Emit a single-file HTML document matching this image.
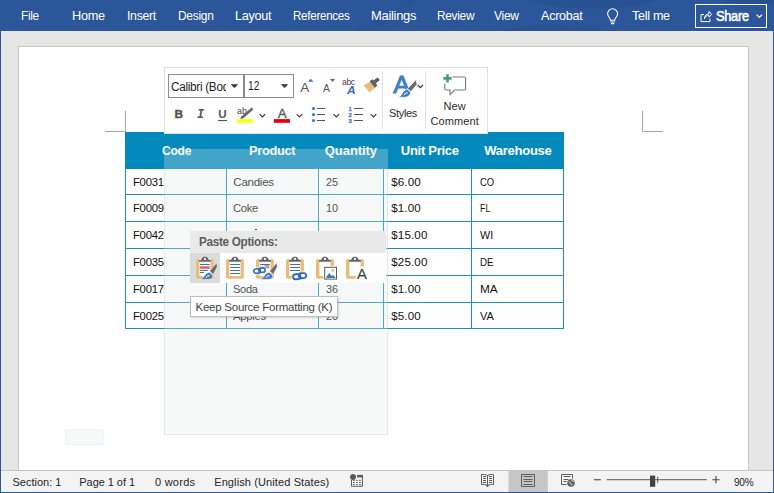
<!DOCTYPE html>
<html lang="en">
<head>
<meta charset="utf-8">
<title>Word - Paste Options</title>
<style>
*{box-sizing:border-box;margin:0;padding:0}
html,body{width:774px;height:493px;overflow:hidden}
body{position:relative;background:#e6e6e6;font-family:"Liberation Sans",sans-serif;color:#262626}
.abs{position:absolute}
.t{position:absolute;white-space:nowrap;line-height:1}
svg{position:absolute;overflow:visible}
#ribbon{left:0;top:0;width:774px;height:31px;background:#2b579a;overflow:hidden}
#ribbon .t{color:#fff}
#lb{left:0;top:0;width:1px;height:493px;background:#2b579a}
#rb{left:773px;top:0;width:1px;height:493px;background:#2b579a}
#bb{left:0;top:492px;width:774px;height:1px;background:#2b579a}
#page{left:18px;top:46px;width:731px;height:430px;background:#fff;border:1px solid #c8c8c8;border-bottom:none}
#status{left:1px;top:470px;width:772px;height:22px;background:#f3f3f3;border-top:1px solid #c6c6c6}
#status .t{color:#333}
.hd{position:absolute;left:125px;top:132px;width:439px;height:37px;background:#0489bd}
.hd .t{color:#fff}
.vl{position:absolute;width:1px;background:#1f8ec4}
.hl{position:absolute;height:1px;background:#1f8ec4}
.c{color:#2a2a2a}
#ov{left:164px;top:149px;width:224px;height:286px;background:rgba(226,233,231,0.28)}
#mt{left:164px;top:67px;width:324px;height:67px;background:#fff;border:1px solid #e1e1e1}
.combo{position:absolute;background:#fff;border:1px solid #8c8c8c;height:24px;top:74px}
.sep{position:absolute;width:1px;background:#e1e1e1}
#ph{left:190px;top:231px;width:196px;height:22px;background:#e9e9e9}
#pi{left:190px;top:253px;width:196px;height:30px;background:#fdfdfd}
#sel{left:190px;top:253px;width:30px;height:30px;background:#dbdbdb}
#tip{left:190px;top:296px;width:148px;height:21px;background:#fff;border:1px solid #bebebe;box-shadow:1px 1px 2px rgba(0,0,0,.15)}
</style>
</head>
<body>
<div id="page" class="abs"></div>
<div id="ribbon" class="abs">
<svg width="774" height="31" viewBox="0 0 774 31" style="left:0;top:0"><ellipse cx="594" cy="-3" rx="63" ry="11.5" fill="rgba(10,20,70,0.09)"/><ellipse cx="765" cy="-1" rx="45" ry="5.5" fill="rgba(10,20,70,0.10)"/><path d="M417 0 C405 12 392 20 372 31 L352 31 C380 20 398 10 406 0 Z" fill="rgba(10,20,70,0.05)"/><path d="M500 31 C530 22 570 24 610 31 Z" fill="rgba(10,20,70,0.06)"/></svg>
<span class="t" style="left:20.90px;top:9px;font-size:13px;letter-spacing:-0.300px;transform:scaleX(0.9033);transform-origin:0 0;">File</span>
<span class="t" style="left:71.90px;top:9px;font-size:13px;letter-spacing:-0.300px;transform:scaleX(0.9797);transform-origin:0 0;">Home</span>
<span class="t" style="left:126.50px;top:9px;font-size:13px;letter-spacing:-0.300px;transform:scaleX(0.9419);transform-origin:0 0;">Insert</span>
<span class="t" style="left:177.90px;top:9px;font-size:13px;letter-spacing:-0.300px;transform:scaleX(0.9179);transform-origin:0 0;">Design</span>
<span class="t" style="left:235.20px;top:9px;font-size:13px;letter-spacing:-0.300px;transform:scaleX(0.9717);transform-origin:0 0;">Layout</span>
<span class="t" style="left:292.90px;top:9px;font-size:13px;letter-spacing:-0.300px;transform:scaleX(0.8903);transform-origin:0 0;">References</span>
<span class="t" style="left:370.50px;top:9px;font-size:13px;letter-spacing:-0.300px;transform:scaleX(0.9981);transform-origin:0 0;">Mailings</span>
<span class="t" style="left:436.50px;top:9px;font-size:13px;letter-spacing:-0.300px;transform:scaleX(0.9105);transform-origin:0 0;">Review</span>
<span class="t" style="left:494.20px;top:9px;font-size:13px;letter-spacing:-0.300px;transform:scaleX(0.9262);transform-origin:0 0;">View</span>
<span class="t" style="left:540.90px;top:9px;font-size:13px;letter-spacing:-0.300px;transform:scaleX(0.9718);transform-origin:0 0;">Acrobat</span>
<span class="t" style="left:631.90px;top:9px;font-size:13px;letter-spacing:-0.300px;transform:scaleX(0.9673);transform-origin:0 0;">Tell me</span>
<div class="abs" style="left:695px;top:4px;width:72px;height:24px;border:1px solid #fff"></div>
<span class="t" style="left:716.10px;top:9px;font-size:14px;letter-spacing:-0.300px;-webkit-text-stroke:0.55px #fff;transform:scaleX(0.9122);transform-origin:0 0;">Share</span>
</div>
<div class="abs" style="left:105px;top:131px;width:21px;height:1px;background:#a6a6a6"></div>
<div class="abs" style="left:125px;top:111px;width:1px;height:21px;background:#a6a6a6"></div>
<div class="abs" style="left:642px;top:131px;width:21px;height:1px;background:#a6a6a6"></div>
<div class="abs" style="left:642px;top:111px;width:1px;height:21px;background:#a6a6a6"></div>
<div class="hd"></div>
<div class="hd" style="background:none">
<span class="t" style="left:36.60px;top:12px;font-size:13px;letter-spacing:-0.300px;font-weight:bold;transform:scaleX(0.9304);transform-origin:0 0;">Code</span>
<span class="t" style="left:123.70px;top:12px;font-size:13px;letter-spacing:-0.300px;font-weight:bold;transform:scaleX(0.9847);transform-origin:0 0;">Product</span>
<span class="t" style="left:199.80px;top:12px;font-size:13px;letter-spacing:-0.064px;font-weight:bold;">Quantity</span>
<span class="t" style="left:275.80px;top:12px;font-size:13px;letter-spacing:-0.276px;font-weight:bold;">Unit Price</span>
<span class="t" style="left:359.30px;top:12px;font-size:13px;letter-spacing:-0.266px;font-weight:bold;">Warehouse</span>
</div>
<div class="hl" style="left:125px;top:194px;width:439px"></div>
<div class="hl" style="left:125px;top:221px;width:439px"></div>
<div class="hl" style="left:125px;top:248px;width:439px"></div>
<div class="hl" style="left:125px;top:275px;width:439px"></div>
<div class="hl" style="left:125px;top:302px;width:439px"></div>
<div class="hl" style="left:125px;top:328px;width:439px"></div>
<div class="vl" style="left:125px;top:168px;height:161px"></div>
<div class="vl" style="left:226px;top:168px;height:161px"></div>
<div class="vl" style="left:318px;top:168px;height:161px"></div>
<div class="vl" style="left:383px;top:168px;height:161px"></div>
<div class="vl" style="left:471px;top:168px;height:161px"></div>
<div class="vl" style="left:563px;top:168px;height:161px"></div>
<span class="t" style="left:133.40px;top:176px;font-size:11.6px;letter-spacing:-0.300px;color:#111;transform:scaleX(0.9768);transform-origin:0 0;">F0031</span>
<span class="t" style="left:233.30px;top:176px;font-size:11.6px;letter-spacing:-0.288px;color:#111;">Candies</span>
<span class="t" style="left:325.80px;top:176px;font-size:11.6px;color:#111;transform:scaleX(0.9353);transform-origin:0 0;">25</span>
<span class="t" style="left:391.20px;top:176px;font-size:11.6px;letter-spacing:0.109px;color:#111;">$6.00</span>
<span class="t" style="left:479.50px;top:176px;font-size:11.6px;color:#111;transform:scaleX(0.8143);transform-origin:0 0;">CO</span>
<span class="t" style="left:133.40px;top:202px;font-size:11.6px;letter-spacing:-0.300px;color:#111;transform:scaleX(0.9768);transform-origin:0 0;">F0009</span>
<span class="t" style="left:233.30px;top:202px;font-size:11.6px;letter-spacing:-0.300px;color:#111;transform:scaleX(0.9685);transform-origin:0 0;">Coke</span>
<span class="t" style="left:325.80px;top:202px;font-size:11.6px;color:#111;transform:scaleX(0.9353);transform-origin:0 0;">10</span>
<span class="t" style="left:391.20px;top:202px;font-size:11.6px;letter-spacing:0.109px;color:#111;">$1.00</span>
<span class="t" style="left:479.50px;top:202px;font-size:11.6px;color:#111;transform:scaleX(0.7594);transform-origin:0 0;">FL</span>
<span class="t" style="left:133.40px;top:229px;font-size:11.6px;letter-spacing:-0.300px;color:#111;transform:scaleX(0.9768);transform-origin:0 0;">F0042</span>
<span class="t" style="left:233.30px;top:229px;font-size:11.6px;letter-spacing:-0.117px;color:#111;">Cookies</span>
<span class="t" style="left:325.80px;top:229px;font-size:11.6px;color:#111;transform:scaleX(0.9353);transform-origin:0 0;">40</span>
<span class="t" style="left:391.30px;top:229px;font-size:11.6px;letter-spacing:0.127px;color:#111;">$15.00</span>
<span class="t" style="left:479.50px;top:229px;font-size:11.6px;color:#111;transform:scaleX(0.9304);transform-origin:0 0;">WI</span>
<span class="t" style="left:133.40px;top:256px;font-size:11.6px;letter-spacing:-0.300px;color:#111;transform:scaleX(0.9768);transform-origin:0 0;">F0035</span>
<span class="t" style="left:233.30px;top:256px;font-size:11.6px;letter-spacing:-0.300px;color:#111;transform:scaleX(0.9877);transform-origin:0 0;">Chips</span>
<span class="t" style="left:325.80px;top:256px;font-size:11.6px;color:#111;transform:scaleX(0.9353);transform-origin:0 0;">30</span>
<span class="t" style="left:391.30px;top:256px;font-size:11.6px;letter-spacing:0.127px;color:#111;">$25.00</span>
<span class="t" style="left:479.50px;top:256px;font-size:11.6px;color:#111;transform:scaleX(0.8434);transform-origin:0 0;">DE</span>
<span class="t" style="left:133.40px;top:283px;font-size:11.6px;letter-spacing:-0.300px;color:#111;transform:scaleX(0.9768);transform-origin:0 0;">F0017</span>
<span class="t" style="left:233.20px;top:283px;font-size:11.6px;letter-spacing:-0.300px;color:#111;transform:scaleX(0.9510);transform-origin:0 0;">Soda</span>
<span class="t" style="left:325.80px;top:283px;font-size:11.6px;color:#111;transform:scaleX(0.9353);transform-origin:0 0;">36</span>
<span class="t" style="left:391.20px;top:283px;font-size:11.6px;letter-spacing:0.109px;color:#111;">$1.00</span>
<span class="t" style="left:479.50px;top:283px;font-size:11.6px;color:#111;transform:scaleX(1.0208);transform-origin:0 0;">MA</span>
<span class="t" style="left:133.40px;top:310px;font-size:11.6px;letter-spacing:-0.300px;color:#111;transform:scaleX(0.9768);transform-origin:0 0;">F0025</span>
<span class="t" style="left:233.30px;top:310px;font-size:11.6px;letter-spacing:-0.300px;color:#111;transform:scaleX(0.9776);transform-origin:0 0;">Apples</span>
<span class="t" style="left:325.80px;top:310px;font-size:11.6px;color:#111;transform:scaleX(0.9353);transform-origin:0 0;">20</span>
<span class="t" style="left:391.20px;top:310px;font-size:11.6px;letter-spacing:0.109px;color:#111;">$5.00</span>
<span class="t" style="left:479.50px;top:310px;font-size:11.6px;color:#111;transform:scaleX(0.9504);transform-origin:0 0;">VA</span>
<div id="ov" class="abs"></div>
<div class="abs" style="left:164px;top:169px;width:224px;height:266px;border:1px solid rgba(170,180,180,0.22);border-top:none"></div>
<div class="abs" style="left:65px;top:429px;width:39px;height:16px;background:#f7f8f8;border:1px solid #f1f2f2"></div>
<div id="mt" class="abs"></div>
<div class="combo" style="left:168px;width:76px"></div>
<div class="combo" style="left:244px;width:50px"></div>
<div class="abs" style="left:169px;top:75px;width:57px;height:22px;overflow:hidden"><span class="t" style="left:2.40px;top:6px;font-size:12px;letter-spacing:-0.300px;color:#1e1e1e;transform:scaleX(0.9800);transform-origin:0 0;">Calibri (Bod</span></div>
<span class="t" style="left:247.80px;top:80px;font-size:12px;color:#1e1e1e;transform:scaleX(0.8523);transform-origin:0 0;">12</span>
<span class="t" style="left:300.20px;top:81px;font-size:13.6px;color:#555;">A</span>
<span class="t" style="left:323.10px;top:84px;font-size:10.4px;color:#555;">A</span>
<span class="t" style="left:342.10px;top:78px;font-size:8.6px;letter-spacing:-0.300px;color:#444;transform:scaleX(0.9897);transform-origin:0 0;">abc</span>
<span class="t" style="left:346.95px;top:85px;font-size:10.6px;font-weight:bold;font-style:italic;color:#2f6fba;transform:scaleX(1.12);transform-origin:0 0;">A</span>
<span class="t" style="left:174.40px;top:109px;font-size:11.8px;font-weight:bold;color:#4d4d4d;-webkit-text-stroke:0.3px #4d4d4d;">B</span>
<span class="t" style="left:197.00px;top:109px;font-size:12px;font-weight:bold;font-style:italic;font-family:'Liberation Mono',monospace;color:#555;">I</span>
<span class="t" style="left:218.20px;top:108px;font-size:11.6px;font-weight:bold;color:#555;">U</span>
<span class="t" style="left:237.20px;top:107px;font-size:8.4px;color:#444;transform:scaleX(1.0523);transform-origin:0 0;">ab</span>
<span class="t" style="left:277.70px;top:107px;font-size:13.4px;color:#5c5c5c;-webkit-text-stroke:0.35px #5c5c5c;">A</span>
<div class="sep" style="left:382px;top:71px;height:58px"></div>
<div class="sep" style="left:425px;top:71px;height:58px"></div>
<span class="t" style="left:389.20px;top:108px;font-size:11px;letter-spacing:-0.300px;color:#2b2b2b;transform:scaleX(0.9952);transform-origin:0 0;">Styles</span>
<span class="t" style="left:443.50px;top:101px;font-size:11px;letter-spacing:0.119px;color:#2b2b2b;">New</span>
<span class="t" style="left:430.40px;top:116px;font-size:11px;letter-spacing:0.135px;color:#2b2b2b;">Comment</span>
<div id="ph" class="abs"></div><div id="pi" class="abs"></div><div id="sel" class="abs"></div><div id="tip" class="abs"></div>
<span class="t" style="left:198.90px;top:236px;font-size:12.4px;letter-spacing:-0.300px;font-weight:bold;color:#5e5e5e;transform:scaleX(0.9447);transform-origin:0 0;">Paste Options:</span>
<div class="abs" style="left:255px;top:229px;width:2px;height:1px;background:#444"></div>
<span class="t" style="left:195.50px;top:302px;font-size:11.5px;letter-spacing:-0.247px;color:#444;">Keep Source Formatting (K)</span>
<div id="status" class="abs"></div>
<span class="t" style="left:12.40px;top:477px;font-size:11px;letter-spacing:0.018px;color:#262626;">Section: 1</span>
<span class="t" style="left:79.30px;top:477px;font-size:11px;letter-spacing:-0.055px;color:#262626;">Page 1 of 1</span>
<span class="t" style="left:155.00px;top:477px;font-size:11px;letter-spacing:0.250px;color:#262626;">0 words</span>
<span class="t" style="left:214.20px;top:477px;font-size:11px;letter-spacing:0.114px;color:#262626;">English (United States)</span>
<span class="t" style="left:734.00px;top:477px;font-size:11px;letter-spacing:-0.300px;color:#262626;transform:scaleX(0.9159);transform-origin:0 0;">90%</span>
<svg width="774" height="493" viewBox="0 0 774 493" style="left:0;top:0"><rect x="196" y="259" width="17.9" height="19.7" rx="1.8" fill="#e8bd7b"/><rect x="199.4" y="258.9" width="11.1" height="17.1" fill="#fff"/><path d="M199.04999999999998 261.8 V260.1 C201.35 259.9 201.54999999999998 259.4 201.85 258.5 C202.35 257.1 203.54999999999998 256.7 204.95 256.7 C206.35 256.7 207.54999999999998 257.1 208.04999999999998 258.5 C208.35 259.4 208.54999999999998 259.9 210.85 260.1 V261.8 Z M203.85 258.9 a1.1 1.1 0 0 0 2.2 0 a1.1 1.1 0 0 0 -2.2 0 z" fill="#666" fill-rule="evenodd"/>
<rect x="200" y="264.0" width="9.800000000000011" height="1" fill="#3a70b8"/>
<path d="M200 266.3 l1.2 2.6 l1.2 -2.6 l1.2 2.6 l1.2 -2.6 l1.2 2.6 l1.2 -2.6 l1.2 2.6 l1.2 -2.6 M200 268.9 l1.2 -2.6 l1.2 2.6 l1.2 -2.6 l1.2 2.6 l1.2 -2.6 l1.2 2.6 l1.2 -2.6 l1.2 2.6" stroke="#d9422c" stroke-width="0.7" fill="none"/>
<rect x="200" y="270.0" width="7.800000000000011" height="1" fill="#3a70b8"/>
<rect x="200" y="272.0" width="4" height="1" fill="#3a70b8"/>
<g transform="translate(0 0)"><path d="M216.9 262.5 L217.3 266.8 L213.4 274.4 L209.5 271 Z" fill="#6b6b6b" stroke="#fff" stroke-width="0.6"/><path d="M209.3 272.3 L212.6 275.4 C213.1 277.2 211.8 279.2 208.6 279.3 L199.3 279.6 C202.4 278.9 203.6 277.4 204.6 275.8 C205.7 274 207.2 272.5 209.3 272.3 Z" fill="#3b75b8" stroke="#fff" stroke-width="0.5"/><path d="M206.2 277.9 C206.8 276.1 207.8 275.1 209 275.3 C209.8 275.7 209.4 276.6 208.6 276.7" stroke="#fff" stroke-width="1" fill="none"/></g>
<rect x="226" y="259" width="17.9" height="19.7" rx="1.8" fill="#e8bd7b"/><rect x="229.4" y="258.9" width="11.1" height="17.1" fill="#fff"/><path d="M229.04999999999998 261.8 V260.1 C231.35 259.9 231.54999999999998 259.4 231.85 258.5 C232.35 257.1 233.54999999999998 256.7 234.95 256.7 C236.35 256.7 237.54999999999998 257.1 238.04999999999998 258.5 C238.35 259.4 238.54999999999998 259.9 240.85 260.1 V261.8 Z M233.85 258.9 a1.1 1.1 0 0 0 2.2 0 a1.1 1.1 0 0 0 -2.2 0 z" fill="#666" fill-rule="evenodd"/>
<rect x="230.2" y="264.0" width="9.800000000000011" height="1" fill="#3a70b8"/><rect x="230.2" y="267.0" width="9.800000000000011" height="1" fill="#3a70b8"/><rect x="230.2" y="270.0" width="9.800000000000011" height="1" fill="#3a70b8"/><rect x="230.2" y="273.0" width="9.800000000000011" height="1" fill="#3a70b8"/>
<rect x="256" y="259" width="17.9" height="19.7" rx="1.8" fill="#e8bd7b"/><rect x="259.4" y="258.9" width="11.1" height="17.1" fill="#fff"/><path d="M259.05 261.8 V260.1 C261.34999999999997 259.9 261.55 259.4 261.84999999999997 258.5 C262.34999999999997 257.1 263.55 256.7 264.95 256.7 C266.34999999999997 256.7 267.55 257.1 268.05 258.5 C268.34999999999997 259.4 268.55 259.9 270.84999999999997 260.1 V261.8 Z M263.84999999999997 258.9 a1.1 1.1 0 0 0 2.2 0 a1.1 1.1 0 0 0 -2.2 0 z" fill="#666" fill-rule="evenodd"/>
<rect x="260.1" y="264.0" width="9.699999999999989" height="1" fill="#3a70b8"/>
<path d="M260.2 266.4 h4.4" stroke="#d9422c" stroke-width="0.7" stroke-dasharray="0.9 0.9" fill="none"/>
<path d="M264.8 265 l2.2 3.6 M267 265 l-2.2 3.6 M267 265 l2.2 3.6 M269.2 265 l-2.2 3.6" stroke="#d9422c" stroke-width="0.7" fill="none"/>
<g transform="translate(259.5 270.6) rotate(-4) scale(0.9)"><g fill="#fff" stroke="#fff" stroke-width="3"><rect x="-6.3" y="-2.1" width="7.2" height="4.8" rx="2.4"/><rect x="-0.9" y="-2.7" width="7.2" height="4.8" rx="2.4"/></g><g fill="none" stroke="#2f6db5" stroke-width="1.8"><rect x="-6.3" y="-2.1" width="7.2" height="4.8" rx="2.4"/><rect x="-0.9" y="-2.7" width="7.2" height="4.8" rx="2.4"/></g></g>
<g transform="translate(60 0)"><path d="M216.9 262.5 L217.3 266.8 L213.4 274.4 L209.5 271 Z" fill="#6b6b6b" stroke="#fff" stroke-width="0.6"/><path d="M209.3 272.3 L212.6 275.4 C213.1 277.2 211.8 279.2 208.6 279.3 L199.3 279.6 C202.4 278.9 203.6 277.4 204.6 275.8 C205.7 274 207.2 272.5 209.3 272.3 Z" fill="#3b75b8" stroke="#fff" stroke-width="0.5"/><path d="M206.2 277.9 C206.8 276.1 207.8 275.1 209 275.3 C209.8 275.7 209.4 276.6 208.6 276.7" stroke="#fff" stroke-width="1" fill="none"/></g>
<rect x="286" y="259" width="17.9" height="19.7" rx="1.8" fill="#e8bd7b"/><rect x="289.4" y="258.9" width="11.1" height="17.1" fill="#fff"/><path d="M289.05 261.8 V260.1 C291.34999999999997 259.9 291.55 259.4 291.84999999999997 258.5 C292.34999999999997 257.1 293.55 256.7 294.95 256.7 C296.34999999999997 256.7 297.55 257.1 298.05 258.5 C298.34999999999997 259.4 298.55 259.9 300.84999999999997 260.1 V261.8 Z M293.84999999999997 258.9 a1.1 1.1 0 0 0 2.2 0 a1.1 1.1 0 0 0 -2.2 0 z" fill="#666" fill-rule="evenodd"/>
<rect x="290.2" y="264.0" width="9.800000000000011" height="1" fill="#3a70b8"/><rect x="290.2" y="267.0" width="9.800000000000011" height="1" fill="#3a70b8"/><rect x="290.2" y="270.0" width="9.800000000000011" height="1" fill="#3a70b8"/>
<g transform="translate(299.6 276.2) rotate(-4) scale(1.04)"><g fill="#fff" stroke="#fff" stroke-width="3"><rect x="-6.3" y="-2.1" width="7.2" height="4.8" rx="2.4"/><rect x="-0.9" y="-2.7" width="7.2" height="4.8" rx="2.4"/></g><g fill="none" stroke="#2f6db5" stroke-width="1.8"><rect x="-6.3" y="-2.1" width="7.2" height="4.8" rx="2.4"/><rect x="-0.9" y="-2.7" width="7.2" height="4.8" rx="2.4"/></g></g>
<rect x="316" y="259" width="17.9" height="19.7" rx="1.8" fill="#e8bd7b"/><rect x="319.4" y="258.9" width="11.1" height="17.1" fill="#fff"/><path d="M319.05 261.8 V260.1 C321.34999999999997 259.9 321.55 259.4 321.84999999999997 258.5 C322.34999999999997 257.1 323.55 256.7 324.95 256.7 C326.34999999999997 256.7 327.55 257.1 328.05 258.5 C328.34999999999997 259.4 328.55 259.9 330.84999999999997 260.1 V261.8 Z M323.84999999999997 258.9 a1.1 1.1 0 0 0 2.2 0 a1.1 1.1 0 0 0 -2.2 0 z" fill="#666" fill-rule="evenodd"/>
<rect x="323.4" y="266" width="14.2" height="14.2" fill="#fff"/>
<rect x="324.7" y="267.3" width="11.8" height="11.8" fill="#fff" stroke="#5a5a5a" stroke-width="1"/>
<path d="M325.8 278 l3.4 -5 l2.6 3.2 l1.2 -1.4 l2.6 3.2 z" fill="#3b75b8"/>
<circle cx="332.8" cy="270.4" r="1.4" fill="#e8bd7b"/>
<rect x="346" y="259" width="17.9" height="19.7" rx="1.8" fill="#e8bd7b"/><rect x="349.4" y="258.9" width="11.1" height="17.1" fill="#fff"/><path d="M349.05 261.8 V260.1 C351.34999999999997 259.9 351.55 259.4 351.84999999999997 258.5 C352.34999999999997 257.1 353.55 256.7 354.95 256.7 C356.34999999999997 256.7 357.55 257.1 358.05 258.5 C358.34999999999997 259.4 358.55 259.9 360.84999999999997 260.1 V261.8 Z M353.84999999999997 258.9 a1.1 1.1 0 0 0 2.2 0 a1.1 1.1 0 0 0 -2.2 0 z" fill="#666" fill-rule="evenodd"/>
<rect x="355.6" y="266.6" width="12" height="13" fill="#fff"/>
<text x="357.1" y="278.7" font-family="Liberation Sans, sans-serif" font-size="14.6" fill="#444" stroke="#444" stroke-width="0.2" textLength="9.9" lengthAdjust="spacingAndGlyphs">A</text>
<path d="M230.6 84.3 h7.6 l-3.8 3.8 z" fill="#333"/>
<path d="M280.7 84.3 h7.6 l-3.8 3.8 z" fill="#333"/>
<path d="M308 81.7 l2.7 -3 l2.7 3 z" fill="#3b78c2"/>
<path d="M329.8 79 h5.4 l-2.7 3 z" fill="#3b78c2"/>
<path d="M363.4 85.2 L371 81.2 L375.2 87.4 L369.6 92.4 Z" fill="#e8bd7b"/>
<path d="M369.6 81 L372.6 79.2 L377.4 85.6 L375 87.8 Z" fill="#5f5f5f"/>
<path d="M373.4 80.6 L377.6 77.4 L379.8 80 L375.6 83.4 Z" fill="#5f5f5f"/>
<rect x="237" y="119.2" width="16.2" height="3.7" fill="#ffff00"/>
<path d="M251.6 107.6 L253.4 109.6 L243.4 118.2 L240.2 119 L241.4 116.2 Z" fill="#6b6b6b"/>
<rect x="273.8" y="119.1" width="16.2" height="3.7" fill="#e8000b"/>
<rect x="218" y="120" width="9" height="1.1" fill="#555"/>
<path d="M259.6 114.2 l2.8 2.8 l2.8 -2.8" fill="none" stroke="#3a3a3a" stroke-width="1.2"/>
<path d="M296.7 114.2 l2.8 2.8 l2.8 -2.8" fill="none" stroke="#3a3a3a" stroke-width="1.2"/>
<path d="M333.6 114.2 l2.8 2.8 l2.8 -2.8" fill="none" stroke="#3a3a3a" stroke-width="1.2"/>
<path d="M370.7 114.2 l2.8 2.8 l2.8 -2.8" fill="none" stroke="#3a3a3a" stroke-width="1.2"/>
<circle cx="313.5" cy="108.5" r="1.6" fill="#3b78c2"/><rect x="317" y="108" width="8" height="1" fill="#555"/>
<rect x="354" y="108" width="9" height="1" fill="#555"/>
<circle cx="313.5" cy="114.5" r="1.6" fill="#3b78c2"/><rect x="317" y="114" width="8" height="1" fill="#555"/>
<rect x="354" y="114" width="9" height="1" fill="#555"/>
<circle cx="313.5" cy="120.5" r="1.6" fill="#3b78c2"/><rect x="317" y="120" width="8" height="1" fill="#555"/>
<rect x="354" y="120" width="9" height="1" fill="#555"/>
<text x="348.6" y="110.9" font-family="Liberation Sans, sans-serif" font-size="5.9" font-weight="bold" fill="#3b78c2" stroke="#3b78c2" stroke-width="0.25">1</text>
<text x="348.6" y="117.1" font-family="Liberation Sans, sans-serif" font-size="5.9" font-weight="bold" fill="#3b78c2" stroke="#3b78c2" stroke-width="0.25">2</text>
<text x="348.6" y="123.1" font-family="Liberation Sans, sans-serif" font-size="5.9" font-weight="bold" fill="#3b78c2" stroke="#3b78c2" stroke-width="0.25">3</text>
<text x="393.3" y="92.5" font-family="Liberation Sans, sans-serif" font-size="23" fill="#3e7fc6" stroke="#3e7fc6" stroke-width="0.9" textLength="16.6" lengthAdjust="spacingAndGlyphs">A</text>
<path d="M416.2 79.6 L417 84.4 L411 91.6 L407.4 88.8 Z" fill="#6b6b6b" stroke="#fff" stroke-width="0.7"/>
<path d="M407.2 89.2 L410.6 92 C411 95 408 97.4 403.8 97.4 L397.8 97 C400.8 96.2 401.8 94.2 402.8 92.4 C404 90.4 405.4 89.4 407.2 89.2 Z" fill="#3e7fc6" stroke="#fff" stroke-width="0.8"/>
<path d="M403.8 95 q1.6 -2.4 4 -2.2" stroke="#fff" stroke-width="1" fill="none"/>
<path d="M417.8 85 l2.6 2.6 l2.6 -2.6" fill="none" stroke="#3a3a3a" stroke-width="1.2"/>
<path d="M452.5 77 H464 q1.6 0 1.6 1.6 V88.4 q0 1.6 -1.6 1.6 H454.6 L450 94.6 V90 H446.4 q-1.6 0 -1.6 -1.6 V83.5" fill="none" stroke="#7a7a7a" stroke-width="1.1"/>
<path d="M446.2 74.2 h2.6 v2.9 h2.9 v2.6 h-2.9 v2.9 h-2.6 v-2.9 h-2.9 v-2.6 h2.9 z" fill="#4a9c7d"/>
<path d="M610.4 20.2 C610.4 17.6 607.6 16.8 607.6 13.8 a5 5 0 0 1 10 0 C617.6 16.8 614.8 17.6 614.8 20.2 Z M610.4 22 h4.4 M611 23.6 h3.2" fill="none" stroke="#fff" stroke-width="1.1"/>
<path d="M704 14.6 H701 V21.6 H710 V18.6 M704.4 18.8 C704.6 15.4 706.6 13.8 709 13.8 V11.4 L711.6 14.4 L709 17.2 V15.2 C707 15.2 705.4 16.2 704.4 18.8 Z" fill="none" stroke="#fff" stroke-width="1"/>
<path d="M756.6 14.6 l2.7 2.7 l2.7 -2.7" fill="none" stroke="#fff" stroke-width="1.2"/>
<rect x="508.5" y="471" width="39.3" height="21" fill="#c6c6c6"/>
<path d="M487.5 475.5 C485.5 474.3 483.5 474.2 481.5 474.6 V484.6 C483.5 484.2 485.5 484.3 487.5 485.5 C489.5 484.3 491.5 484.2 493.5 484.6 V474.6 C491.5 474.2 489.5 474.3 487.5 475.5 Z M487.5 475.5 V487" fill="none" stroke="#5f5f5f" stroke-width="1"/>
<path d="M483 476.5 h3 M483 478.5 h3 M483 480.5 h3 M483 482.5 h3 M489 476.5 h3 M489 478.5 h3 M489 480.5 h3 M489 482.5 h3" stroke="#5f5f5f" stroke-width="1"/>
<path d="M485.8 485.2 l1.7 1.7 l1.7 -1.7" fill="none" stroke="#5f5f5f" stroke-width="0.9"/>
<rect x="521.5" y="474.5" width="13" height="12" fill="none" stroke="#5f5f5f" stroke-width="1"/>
<path d="M523.5 476.5 h9 M523.5 479.5 h9 M523.5 481.5 h9 M523.5 484.5 h9" stroke="#5f5f5f" stroke-width="1"/>
<path d="M566.5 484.5 H561.5 V474.5 H572.5 V478.5" fill="none" stroke="#5f5f5f" stroke-width="1"/>
<path d="M563.5 476.5 h7 M563.5 479.5 h5 M563.5 481.5 h3" stroke="#5f5f5f" stroke-width="1"/>
<circle cx="571" cy="483" r="3.8" fill="#5f5f5f"/><path d="M568.6 481.6 q1.6 .2 1.8 1.6 t2 1.6 M571.4 479.8 q.6 1.6 2.4 1.6" stroke="#f3f3f3" stroke-width="0.9" fill="none"/>
<rect x="594" y="479.2" width="6.8" height="1.1" fill="#444"/>
<rect x="606.7" y="479.2" width="100.2" height="1" fill="#555"/>
<rect x="650" y="475.6" width="5.2" height="11.2" fill="#444"/>
<rect x="657.2" y="476.8" width="1" height="6" fill="#555"/>
<path d="M712.3 479.7 h7.2 M715.9 476.1 v7.2" stroke="#444" stroke-width="1.1"/>
<path d="M351.5 480 V486.3 H362.4 V475.4 H357" fill="none" stroke="#5a5a5a" stroke-width="1"/>
<rect x="357" y="475" width="5.9" height="2.4" fill="#5a5a5a"/>
<circle cx="353" cy="476.9" r="3" fill="#5a5a5a"/>
<rect x="353" y="479.90000000000003" width="1.8" height="0.9" fill="#5a5a5a"/>
<rect x="356" y="479.90000000000003" width="1.8" height="0.9" fill="#5a5a5a"/>
<rect x="359" y="479.90000000000003" width="1.8" height="0.9" fill="#5a5a5a"/>
<rect x="353" y="482.0" width="1.8" height="0.9" fill="#5a5a5a"/>
<rect x="356" y="482.0" width="1.8" height="0.9" fill="#5a5a5a"/>
<rect x="359" y="482.0" width="1.8" height="0.9" fill="#5a5a5a"/>
<rect x="353" y="484.0" width="1.8" height="0.9" fill="#5a5a5a"/>
<rect x="356" y="484.0" width="1.8" height="0.9" fill="#5a5a5a"/>
<rect x="359" y="484.0" width="1.8" height="0.9" fill="#5a5a5a"/></svg>
<div id="lb" class="abs"></div><div id="rb" class="abs"></div><div id="bb" class="abs"></div>
</body>
</html>
